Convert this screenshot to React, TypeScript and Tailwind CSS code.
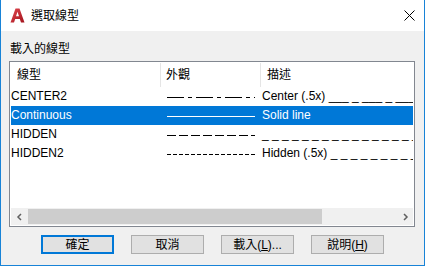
import React from "react";

const FONT = "font-['Liberation_Sans','Noto_Sans_CJK_TC',sans-serif]";

type Row = {
  name: string;
  dash: string | null; // svg dasharray, null = solid
  desc: string;
};

const rows: Row[] = [
  { name: "CENTER2", dash: "17 4 4 4", desc: "Center (.5x) ___ _ ___ _ ___ _ ___ _" },
  { name: "Continuous", dash: null, desc: "Solid line" },
  { name: "HIDDEN", dash: "9 3", desc: "_ _ _ _ _ _ _ _ _ _ _ _ _ _ _ _ _ _ _" },
  { name: "HIDDEN2", dash: "4 2", desc: "Hidden (.5x) _ _ _ _ _ _ _ _ _ _ _ _" },
];

const selected = "Continuous";

function AcadIcon() {
  return (
    <svg width="15" height="15" viewBox="0 0 15 15">
      <defs>
        <linearGradient id="acad" x1="0" y1="0" x2="1" y2="1">
          <stop offset="0" stopColor="#e2474f" />
          <stop offset="1" stopColor="#a1131c" />
        </linearGradient>
      </defs>
      <path
        fillRule="evenodd"
        fill="url(#acad)"
        d="M0.5 14.5 L5.5 0.5 L9.5 0.5 L14.5 14.5 L11 14.5 L9.8 11 L5.2 11 L4 14.5 Z M6 8.3 L9 8.3 L7.5 3.8 Z"
      />
    </svg>
  );
}

function LinePreview({ dash, light }: { dash: string | null; light: boolean }) {
  return (
    <svg width="88" height="19" viewBox="0 0 88 19" className="block">
      <line
        x1="0"
        y1="10.5"
        x2="88"
        y2="10.5"
        stroke={light ? "#ffffff" : "#000000"}
        strokeWidth="1"
        strokeDasharray={dash ?? undefined}
      />
    </svg>
  );
}

function Scrollbar() {
  return (
    <div className="h-[17px] flex bg-[#f0f0f0] shrink-0">
      <div className="w-[17px] flex items-center justify-center">
        <svg width="8" height="8" viewBox="0 0 8 8">
          <path d="M5 1 L2 4 L5 7" fill="none" stroke="#606060" strokeWidth="1.5" />
        </svg>
      </div>
      <div className="w-[294px] bg-[#cdcdcd] my-[1px]" />
      <div className="flex-1" />
      <div className="w-[17px] flex items-center justify-center">
        <svg width="8" height="8" viewBox="0 0 8 8">
          <path d="M3 1 L6 4 L3 7" fill="none" stroke="#606060" strokeWidth="1.5" />
        </svg>
      </div>
    </div>
  );
}

export default function App() {
  return (
    <div
      className={`w-[425px] h-[266px] flex flex-col bg-[#f0f0f0] border-x border-b border-[#1883d7] text-[12px] text-black ${FONT}`}
    >
      {/* Title bar */}
      <div className="h-[31px] bg-white flex items-center pl-[9px] pr-[9px] shrink-0">
        <AcadIcon />
        <span className="ml-[6px] leading-[16px]">選取線型</span>
        <div className="flex-1" />
        <svg width="11" height="11" viewBox="0 0 11 11">
          <path d="M0.5 0.5 L10.5 10.5 M10.5 0.5 L0.5 10.5" stroke="#000" strokeWidth="1" />
        </svg>
      </div>

      {/* Body */}
      <div className="flex-1 flex flex-col pl-[8px] pr-[9px] pt-[10px]">
        <div className="h-[16px] leading-[16px] pl-[1px]">載入的線型</div>

        <div className="mt-[4px] h-[166px] border border-[#828790] bg-white p-[1px] flex flex-col">
          <div className="flex-1 overflow-hidden">
            {/* Header */}
            <div className="flex h-[24px] items-center whitespace-nowrap">
              <div className="w-[150px] h-full border-r border-[#e5e5e5] pl-[6px] flex items-center">線型</div>
              <div className="w-[100px] h-full border-r border-[#e5e5e5] pl-[5px] flex items-center">外觀</div>
              <div className="flex-1 pl-[6px] flex items-center">描述</div>
            </div>

            {rows.map((r) => {
              const sel = r.name === selected;
              return (
                <div
                  key={r.name}
                  className={`flex h-[19px] items-center whitespace-nowrap ${
                    sel ? "bg-[#0078d7] text-white" : ""
                  }`}
                >
                  <div className="w-[150px] leading-[19px]">{r.name}</div>
                  <div className="w-[100px] pl-[6px]">
                    <LinePreview dash={r.dash} light={sel} />
                  </div>
                  <div className="flex-1 pl-[1px] leading-[19px] overflow-hidden">{r.desc}</div>
                </div>
              );
            })}
          </div>
          <Scrollbar />
        </div>

        {/* Buttons */}
        <div className="mt-[8px] flex justify-center gap-[17px] pl-[1px]">
          <button className="w-[73px] h-[19px] bg-[#e1e1e1] border-2 border-[#0078d7] flex items-center justify-center leading-none">
            確定
          </button>
          <button className="w-[73px] h-[19px] bg-[#e1e1e1] border border-[#adadad] flex items-center justify-center leading-none">
            取消
          </button>
          <button className="w-[73px] h-[19px] bg-[#e1e1e1] border border-[#adadad] flex items-center justify-center leading-none">
            載入(<u>L</u>)...
          </button>
          <button className="w-[73px] h-[19px] bg-[#e1e1e1] border border-[#adadad] flex items-center justify-center leading-none">
            說明(<u>H</u>)
          </button>
        </div>
      </div>
    </div>
  );
}
